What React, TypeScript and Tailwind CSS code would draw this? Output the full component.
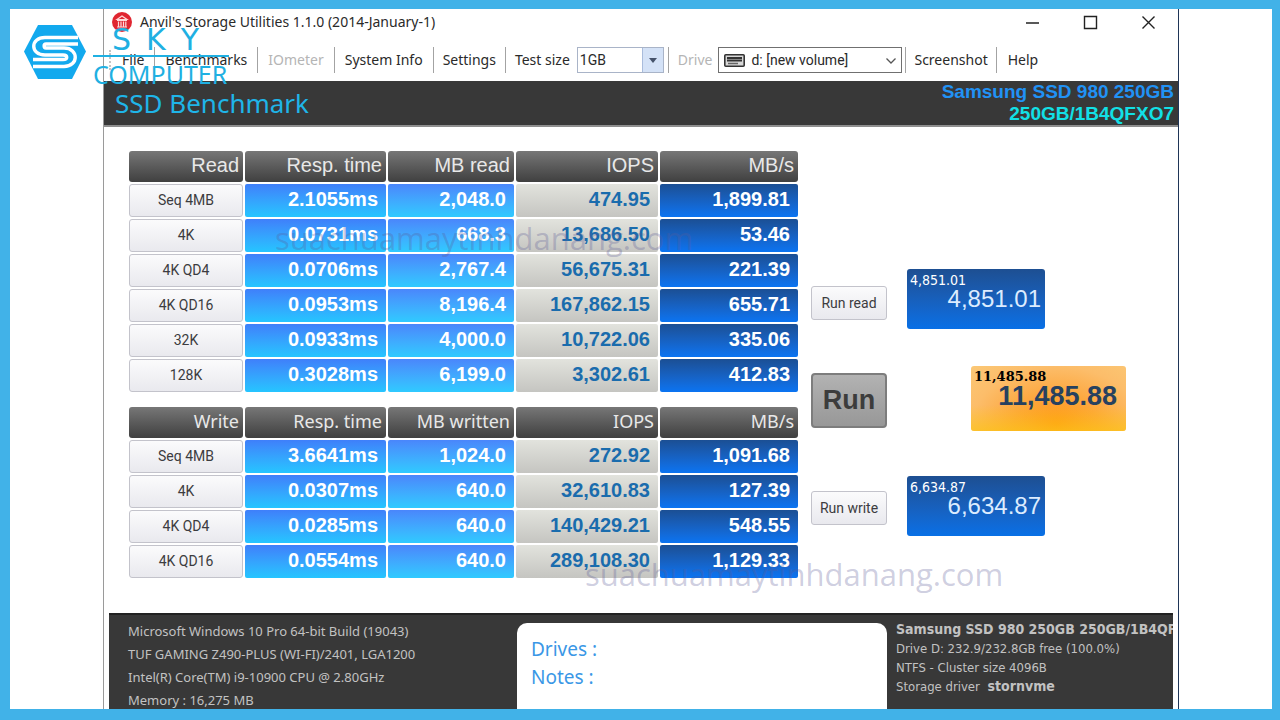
import React from "react";

type Row = { label: string; resp: string; mb: string; iops: string; rate: string };

const readRows: Row[] = [
  { label: "Seq 4MB", resp: "2.1055ms", mb: "2,048.0", iops: "474.95", rate: "1,899.81" },
  { label: "4K", resp: "0.0731ms", mb: "668.3", iops: "13,686.50", rate: "53.46" },
  { label: "4K QD4", resp: "0.0706ms", mb: "2,767.4", iops: "56,675.31", rate: "221.39" },
  { label: "4K QD16", resp: "0.0953ms", mb: "8,196.4", iops: "167,862.15", rate: "655.71" },
  { label: "32K", resp: "0.0933ms", mb: "4,000.0", iops: "10,722.06", rate: "335.06" },
  { label: "128K", resp: "0.3028ms", mb: "6,199.0", iops: "3,302.61", rate: "412.83" },
];

const writeRows: Row[] = [
  { label: "Seq 4MB", resp: "3.6641ms", mb: "1,024.0", iops: "272.92", rate: "1,091.68" },
  { label: "4K", resp: "0.0307ms", mb: "640.0", iops: "32,610.83", rate: "127.39" },
  { label: "4K QD4", resp: "0.0285ms", mb: "640.0", iops: "140,429.21", rate: "548.55" },
  { label: "4K QD16", resp: "0.0554ms", mb: "640.0", iops: "289,108.30", rate: "1,129.33" },
];

const buttonFace =
  "rounded-[3px] border border-[#c3c3cb] bg-gradient-to-b from-[#fbfbfc] to-[#e9e9ee] font-['Roboto','Liberation_Sans',sans-serif] text-[14px] text-[#3c3c40]";
const valueCell = "rounded-[2px] p-0 pb-1 pr-2 text-right text-[20px] leading-6 font-bold";

function ResultTable({ title, mbTitle, rows, font }: { title: string; mbTitle: string; rows: Row[]; font: string }) {
  const head =
    "h-[30px] rounded-[3px] bg-gradient-to-b from-[#777777] to-[#404040] p-0 pb-1 pr-1 text-right leading-6 font-normal text-[#e8e8e8]";
  return (
    <table className="w-[673px] table-fixed border-separate border-spacing-[2px] font-['Liberation_Sans',Arial,sans-serif]">
      <colgroup>
        <col className="w-[114px]" />
        <col className="w-[141px]" />
        <col className="w-[126px]" />
        <col className="w-[142px]" />
        <col className="w-[138px]" />
      </colgroup>
      <thead className={font}>
        <tr className="h-[31px]">
          {[title, "Resp. time", mbTitle, "IOPS", "MB/s"].map((t) => (
            <th key={t} scope="col" className={head}>
              {t}
            </th>
          ))}
        </tr>
      </thead>
      <tbody>
        {rows.map((r) => (
          <tr key={r.label} className="h-[33px]">
            <th scope="row" className="h-[33px] p-0">
              <button type="button" className={`block h-[33px] w-full font-normal ${buttonFace}`}>
                {r.label}
              </button>
            </th>
            <td className={`${valueCell} bg-gradient-to-b from-[#3f7ffa] to-[#25c5ff] text-white`}>{r.resp}</td>
            <td className={`${valueCell} bg-gradient-to-b from-[#4a86fb] to-[#2fcaff] text-white`}>{r.mb}</td>
            <td className={`${valueCell} bg-gradient-to-b from-[#e2e3dd] to-[#c5c5c1] text-[#1a6cad]`}>{r.iops}</td>
            <td className={`${valueCell} bg-gradient-to-b from-[#1b4f94] to-[#0a74f2] text-white`}>{r.rate}</td>
          </tr>
        ))}
      </tbody>
    </table>
  );
}

function BlueScore({ value }: { value: string }) {
  return (
    <div className="h-[60px] w-[138px] rounded-[3px] bg-gradient-to-b from-[#1d4f92] to-[#0870e6] font-['Liberation_Sans',Arial,sans-serif] text-white">
      <div className="pt-1 pl-[3px] font-['DejaVu_Sans_Condensed','DejaVu_Sans',sans-serif] text-[14px] leading-[14px]">{value}</div>
      <div className="pr-1 text-right text-[24px] leading-6 text-[#dcecff]">{value}</div>
    </div>
  );
}

const Sep = () => <span className="h-[26px] w-px bg-[#a3a3a3]" />;

export default function App() {
  return (
    <div className="relative flex min-h-screen flex-col border-t-[9px] border-r-8 border-b-[11px] border-l-[10px] border-[#41b2e8] bg-white">
      <div className="mx-[93px] flex flex-1 flex-col border-x border-l-[#9a9a9a] border-r-[#1f3557] font-['Noto_Sans','Open_Sans',sans-serif] text-[#2a2a2a]">
        <header className="flex h-[26px] items-center pl-2">
          <svg viewBox="0 0 20 20" className="size-5" aria-hidden="true">
            <circle cx="10" cy="10" r="10" fill="#e02631" />
            <path d="M5 7.5 10 4l5 3.500zM5 8.500h10M6.500 9.500v5M9 9.500v5M11.500 9.500v5M13.800 9.500v5M5 15h10" fill="none" stroke="#ffd9d9" strokeWidth="1.200" />
          </svg>
          <h1 className="ml-2 text-[14px] leading-5">Anvil's Storage Utilities 1.1.0 (2014-January-1)</h1>
          <div className="ml-auto flex items-center gap-[43px] pr-[22px] text-[#222]">
            <button type="button" aria-label="Minimize">
              <svg viewBox="0 0 15 15" className="size-[15px]"><path d="M1 8h13" stroke="currentColor" strokeWidth="1.500" /></svg>
            </button>
            <button type="button" aria-label="Maximize">
              <svg viewBox="0 0 15 15" className="size-[15px]"><path d="M1.500 1.500h12v12h-12z" fill="none" stroke="currentColor" strokeWidth="1.400" /></svg>
            </button>
            <button type="button" aria-label="Close">
              <svg viewBox="0 0 15 15" className="size-[15px]"><path d="M1.500 1.500l12 12M13.500 1.500l-12 12" stroke="currentColor" strokeWidth="1.400" /></svg>
            </button>
          </div>
        </header>

        <nav className="flex h-[46px] items-center pt-1 pl-[5px] text-[14px] leading-5 whitespace-nowrap">
          <span className="h-5 w-0.5 border-l-2 border-dotted border-[#c4c4c4]" />
          <button type="button" className="mr-[10px] ml-[11px]">File</button>
          <Sep />
          <button type="button" className="mx-[10px]">Benchmarks</button>
          <Sep />
          <button type="button" disabled className="mx-[10px] text-[#b5b5b5]">IOmeter</button>
          <Sep />
          <button type="button" className="mx-[10px]">System Info</button>
          <Sep />
          <button type="button" className="mx-[9px]">Settings</button>
          <Sep />
          <label htmlFor="size" className="ml-[9px]">Test size</label>
          <div className="relative ml-[7px] flex">
            <select id="size" defaultValue="1GB" className="h-[26px] w-[87px] appearance-none border border-[#a9b4c8] bg-white pl-0.5 font-['Roboto',sans-serif] text-[14px]">
              <option>1GB</option>
            </select>
            <span className="pointer-events-none absolute top-px right-px flex h-6 w-[21px] items-center justify-center border-l border-[#a9bcdc] bg-[#d4e2f7]">
              <svg viewBox="0 0 8 5" className="h-[5px] w-2"><path d="M0 0h8L4 5z" fill="#46536b" /></svg>
            </span>
          </div>
          <span className="ml-1 flex"><Sep /></span>
          <label htmlFor="drive" className="ml-[9px] text-[#b5b5b5]">Drive</label>
          <div className="relative ml-[6px] flex">
            <select id="drive" defaultValue="d" className="h-[26px] w-[184px] appearance-none border border-[#707070] bg-white pl-8 font-['Roboto',sans-serif] text-[14px]">
              <option value="d">d: [new volume]</option>
            </select>
            <svg viewBox="0 0 21 13" className="pointer-events-none absolute top-[7px] left-[6px] h-[13px] w-[21px]">
              <rect x="0.800" y="0.800" width="19.400" height="11.400" rx="1" fill="#d8d8d8" stroke="#333" strokeWidth="1.600" />
              <path d="M3 4h15M3 6.500h15" stroke="#333" strokeWidth="1.800" />
              <path d="M4 9.500h10" stroke="#666" strokeWidth="1.500" />
            </svg>
            <svg viewBox="0 0 10 6" className="pointer-events-none absolute top-[11px] right-[6px] h-[6px] w-[10px]">
              <path d="M0.500 0.500 5 5l4.500-4.500" fill="none" stroke="#555" strokeWidth="1.300" />
            </svg>
          </div>
          <span className="ml-[3px] flex"><Sep /></span>
          <button type="button" className="mx-2">Screenshot</button>
          <Sep />
          <button type="button" className="mx-[11px]">Help</button>
        </nav>

        <section className="flex h-[46px] items-center justify-between border-b-2 border-[#8e8e8e] bg-[#383838] pr-1 pl-[11px]">
          <h2 className="text-[26px] leading-8 text-[#1fb5e8]">SSD Benchmark</h2>
          <div className="pb-px text-right font-['Liberation_Sans',Arial,sans-serif] text-[19px] leading-[22px] font-bold">
            <div className="text-[#2192f5]">Samsung SSD 980 250GB</div>
            <div className="text-[#12e0e6]">250GB/1B4QFXO7</div>
          </div>
        </section>

        <main className="flex flex-1 pt-[22px] pl-[23px]">
          <div>
            <ResultTable title="Read" mbTitle="MB read" rows={readRows} font="font-['Liberation_Sans',Arial,sans-serif] text-[20px]" />
            <div className="pt-[11px]">
              <ResultTable title="Write" mbTitle="MB written" rows={writeRows} font="font-['Noto_Sans','Open_Sans',sans-serif] text-[18px]" />
            </div>
          </div>
          <div className="flex flex-1 flex-col pt-[120px] pl-[11px]">
            <div className="flex items-center gap-5">
              <button type="button" className={`mt-2 h-[34px] w-[76px] ${buttonFace}`}>Run read</button>
              <BlueScore value="4,851.01" />
            </div>
            <div className="mt-[37px] flex items-center gap-[84px]">
              <button type="button" className="mt-[3px] h-[55px] w-[76px] rounded-[4px] border-2 border-[#7d7d7d] bg-gradient-to-b from-[#b2b2b2] to-[#989898] font-['Liberation_Sans',Arial,sans-serif] text-[27px] font-bold text-[#3c3c3c]">
                Run
              </button>
              <div className="h-[65px] w-[155px] rounded-[3px] bg-[radial-gradient(ellipse_at_55%_90%,#ff9416_0%,#fda63c_35%,#fcbd6a_70%,#fbc876_100%)]">
                <div className="h-full rounded-[3px] bg-gradient-to-t from-[#fcc414]/70 to-transparent to-40%">
                  <div className="pt-1 pl-[3px] font-['DejaVu_Serif','Liberation_Serif',serif] text-[13px] leading-[14px] font-bold text-black">11,485.88</div>
                  <div className="pr-[9px] text-right font-['Liberation_Sans',Arial,sans-serif] text-[27px] leading-6 font-bold text-[#27415f]">11,485.88</div>
                </div>
              </div>
            </div>
            <div className="mt-[45px] flex items-center gap-5">
              <button type="button" className={`mt-1 h-[34px] w-[76px] ${buttonFace}`}>Run write</button>
              <BlueScore value="6,634.87" />
            </div>
          </div>
        </main>

        <footer className="mx-[5px] grid h-24 grid-cols-[408px_370px_1fr] overflow-hidden border-t-2 border-[#222222] bg-[#383838] font-['DejaVu_Sans_Condensed','DejaVu_Sans',sans-serif] text-[13px] text-[#c2c2c2]">
          <div className="pt-[5px] pl-[19px] font-['Noto_Sans','Open_Sans',sans-serif] leading-[23px] whitespace-nowrap">
            <p>Microsoft Windows 10 Pro 64-bit Build (19043)</p>
            <p>TUF GAMING Z490-PLUS (WI-FI)/2401, LGA1200</p>
            <p>Intel(R) Core(TM) i9-10900 CPU @ 2.80GHz</p>
            <p>Memory : 16,275 MB</p>
          </div>
          <div className="mt-2 rounded-t-[10px] bg-white pt-3 pl-[14px] font-['Noto_Sans','Open_Sans',sans-serif] text-[19px] leading-7 text-[#3a97e6]">
            <p>Drives :</p>
            <p>Notes :</p>
          </div>
          <div className="min-w-0 overflow-hidden pt-[5px] pl-[9px] leading-[19px] whitespace-nowrap">
            <p className="text-[14px] font-bold">Samsung SSD 980 250GB 250GB/1B4QFXO7</p>
            <p>Drive D: 232.9/232.8GB free (100.0%)</p>
            <p>NTFS - Cluster size 4096B</p>
            <p>Storage driver <b className="ml-1 text-[14px]">stornvme</b></p>
          </div>
        </footer>
      </div>

      <div className="pointer-events-none absolute top-[15px] left-[13px] flex">
        <svg viewBox="23 24 64 56" className="h-14 w-16 shrink-0" aria-hidden="true">
          <path d="M38 25h34l14 26.500L72 79H38L24 51.500z" fill="#12a9ee" />
          <path d="M78 37.500H45c-15 0-15 17.500 0 17.500h18c5 0 5 4.500 0 4.500H33" fill="none" stroke="#fff" strokeWidth="3.400" />
          <path d="M78 44H46c-2.500 0-2.500 4 0 4h18c15 0 15 18.500 0 18.500H33" fill="none" stroke="#fff" strokeWidth="3.400" />
        </svg>
        <div className="ml-[6px] w-[136px] font-['Noto_Sans','Open_Sans',sans-serif] text-[#1fb0e2]">
          <div className="flex h-[33px] items-center gap-[15px] border-b-2 pl-[19px] font-['DejaVu_Sans',sans-serif] text-[30px] leading-8">
            <span>S</span>
            <span>K</span>
            <span>Y</span>
          </div>
          <div className="text-[25px] leading-[34px]">COMPUTER</div>
        </div>
      </div>
      <div className="pointer-events-none absolute top-[211px] left-[265px] font-['Open_Sans','Noto_Sans',sans-serif] text-[31px] leading-9 text-[#5a5a96]/30">suachuamaytinhdanang.com</div>
      <div className="pointer-events-none absolute top-[547px] left-[575px] font-['Open_Sans','Noto_Sans',sans-serif] text-[31px] leading-9 text-[#5a5a96]/30">suachuamaytinhdanang.com</div>
    </div>
  );
}
